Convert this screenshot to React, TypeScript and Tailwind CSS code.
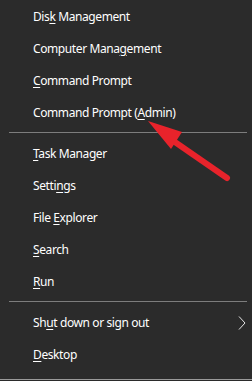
import type { ReactNode } from 'react';

type Item = { label: ReactNode; submenu?: boolean };

// underline the access key letter
function k(before: string, key: string, after: string) {
  return (
    <>
      {before}
      <span className="underline underline-offset-2">{key}</span>
      {after}
    </>
  );
}

const groups: Item[][] = [
  [
    { label: k('Dis', 'k', ' Management') },
    { label: k('Computer Mana', 'g', 'ement') },
    { label: k('', 'C', 'ommand Prompt') },
    { label: k('Command Prompt (', 'A', 'dmin)') },
  ],
  [
    { label: k('', 'T', 'ask Manager') },
    { label: k('Setti', 'n', 'gs') },
    { label: k('File ', 'E', 'xplorer') },
    { label: k('', 'S', 'earch') },
    { label: k('', 'R', 'un') },
  ],
  [
    { label: k('Sh', 'u', 't down or sign out'), submenu: true },
    { label: k('', 'D', 'esktop') },
  ],
];

function Row({ item }: { item: Item }) {
  return (
    <div className="flex h-8 items-center justify-between pl-[33px] pr-[6px]">
      <span className="mt-[2px]">{item.label}</span>
      {item.submenu && (
        <svg width="8" height="14" viewBox="0 0 8 14" className="mt-px">
          <polyline points="1,0.5 7,7 1,13.5" fill="none" stroke="#e6e6e6" strokeWidth="1" />
        </svg>
      )}
    </div>
  );
}

export default function App() {
  return (
    <div className="relative h-[381px] w-[252px] overflow-hidden bg-[#2b2b2b] font-['Noto_Sans',sans-serif] text-[12px] tracking-[-0.4px] text-white">
      <div className="flex h-[380px] flex-col border-b border-[#9a9a9a]">
        {groups.map((g, i) => (
          <div key={i}>
            {i > 0 && (
              <div className="flex h-[9px] items-center pl-[9px] pr-[5px]">
                <div className="h-px w-full bg-[#7d7d7d]" />
              </div>
            )}
            {g.map((item, j) => (
              <Row key={j} item={item} />
            ))}
          </div>
        ))}
      </div>

      {/* red annotation arrow */}
      <svg className="absolute left-0 top-0" width="252" height="381" viewBox="0 0 252 381">
        <line x1="227" y1="178" x2="172" y2="140" stroke="#e8232b" strokeWidth="6" strokeLinecap="round" />
        <polygon points="148,121 182,132 171,149" fill="#e8232b" />
      </svg>
    </div>
  );
}
